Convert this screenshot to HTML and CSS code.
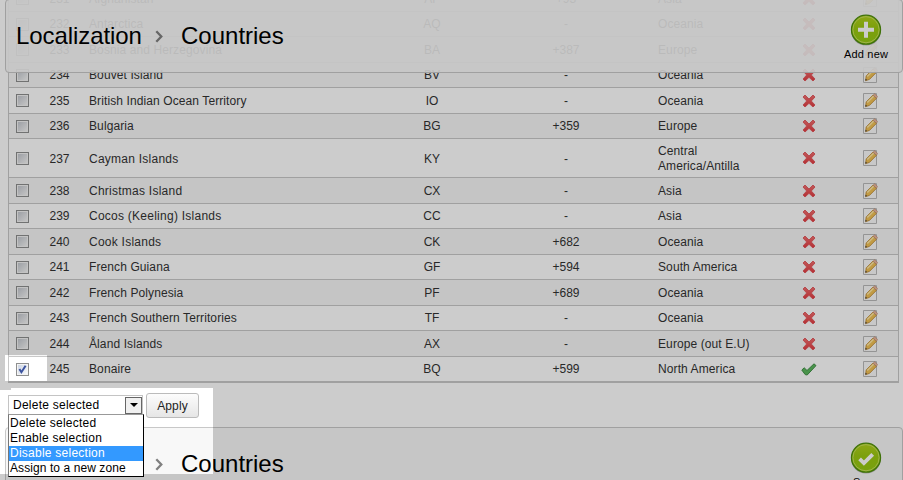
FILE: index.html
```html
<!DOCTYPE html>
<html lang="en">
<head>
<meta charset="utf-8">
<title>Localization - Countries</title>
<link rel="stylesheet" href="styles.css">
</head>
<body>
<svg class="defs" aria-hidden="true">
  <defs>
    <linearGradient id="red" x1="0" y1="0" x2="0" y2="1"><stop offset="0" stop-color="#f27070"/><stop offset="1" stop-color="#e23c42"/></linearGradient>
    <linearGradient id="green" x1="0" y1="0" x2="0" y2="1"><stop offset="0" stop-color="#b3d21c"/><stop offset=".45" stop-color="#9bc811"/><stop offset="1" stop-color="#96cb14"/></linearGradient>
  </defs>
  <symbol id="cross" viewBox="0 0 14 14"><path d="M3 1 7 5 11 1 13 3 9.3 7 13 11 11 13 7 9.3 3 13 1 11 4.7 7 1 3z" fill="url(#red)" stroke="#e2555a" stroke-width=".9"/></symbol>
  <symbol id="tick" viewBox="0 0 16 13"><path d="M.8 7 3.2 4.8 6 7.5 13 .8 15 2.6 6.2 12 4.2 11.6z" fill="#5cb85e" stroke="#3f8f45" stroke-width="1"/></symbol>
  <symbol id="edit" viewBox="0 0 16 16"><path d="M1.5.5h13v15h-13z" fill="#fafafa" stroke="#bababa"/><path d="M4.2 8.9 11 2.1l3.4 3.3-6.8 6.9-4 1.4z" fill="#f2c256" stroke="#b98430" stroke-width=".8"/><path d="m5.3 9.5 6.5-6.5" stroke="#ffeaa8" stroke-width="1.3"/><path d="m11 2.2 1.7-1.6 3 3-1.4 1.7z" fill="#eab59c" stroke="#b18468" stroke-width=".5"/><path d="m3.2 13.6.5-1.9 1.4 1.4z" fill="#444"/></symbol>
</svg>
<div class="page">
  <div class="countries">
    <div class="row r26 alt"><i class="check"></i><span>231</span><b>Afghanistan</b><span>AF</span><span>+93</span><b class="zone">Asia</b><svg class="x"><use href="#cross"/></svg><svg class="e"><use href="#edit"/></svg></div>
    <div class="row r25"><i class="check"></i><span>232</span><b>Antarctica</b><span>AQ</span><span>-</span><b class="zone">Oceania</b><svg class="x"><use href="#cross"/></svg><svg class="e"><use href="#edit"/></svg></div>
    <div class="row r26"><i class="check"></i><span>233</span><b>Bosnia and Herzegovina</b><span>BA</span><span>+387</span><b class="zone">Europe</b><svg class="x"><use href="#cross"/></svg><svg class="e"><use href="#edit"/></svg></div>
    <div class="row r25 alt"><i class="check"></i><span>234</span><b>Bouvet Island</b><span>BV</span><span>-</span><b class="zone">Oceania</b><svg class="x"><use href="#cross"/></svg><svg class="e"><use href="#edit"/></svg></div>
    <div class="row r26"><i class="check"></i><span>235</span><b>British Indian Ocean Territory</b><span>IO</span><span>-</span><b class="zone">Oceania</b><svg class="x"><use href="#cross"/></svg><svg class="e"><use href="#edit"/></svg></div>
    <div class="row r25 alt"><i class="check"></i><span>236</span><b>Bulgaria</b><span>BG</span><span>+359</span><b class="zone">Europe</b><svg class="x"><use href="#cross"/></svg><svg class="e"><use href="#edit"/></svg></div>
    <div class="row r39"><i class="check"></i><span>237</span><b class="loose">Cayman Islands</b><span>KY</span><span>-</span><b class="zone">Central<br>America/Antilla</b><svg class="x"><use href="#cross"/></svg><svg class="e"><use href="#edit"/></svg></div>
    <div class="row r26 alt"><i class="check"></i><span>238</span><b class="loose">Christmas Island</b><span>CX</span><span>-</span><b class="zone">Asia</b><svg class="x"><use href="#cross"/></svg><svg class="e"><use href="#edit"/></svg></div>
    <div class="row r25"><i class="check"></i><span>239</span><b class="loose">Cocos (Keeling) Islands</b><span>CC</span><span>-</span><b class="zone">Asia</b><svg class="x"><use href="#cross"/></svg><svg class="e"><use href="#edit"/></svg></div>
    <div class="row r26 alt"><i class="check"></i><span>240</span><b class="loose">Cook Islands</b><span>CK</span><span>+682</span><b class="zone">Oceania</b><svg class="x"><use href="#cross"/></svg><svg class="e"><use href="#edit"/></svg></div>
    <div class="row r25"><i class="check"></i><span>241</span><b>French Guiana</b><span>GF</span><span>+594</span><b class="zone">South America</b><svg class="x"><use href="#cross"/></svg><svg class="e"><use href="#edit"/></svg></div>
    <div class="row r26 alt"><i class="check"></i><span>242</span><b>French Polynesia</b><span>PF</span><span>+689</span><b class="zone">Oceania</b><svg class="x"><use href="#cross"/></svg><svg class="e"><use href="#edit"/></svg></div>
    <div class="row r25"><i class="check"></i><span>243</span><b>French Southern Territories</b><span>TF</span><span>-</span><b class="zone">Oceania</b><svg class="x"><use href="#cross"/></svg><svg class="e"><use href="#edit"/></svg></div>
    <div class="row r26 alt"><i class="check"></i><span>244</span><b>Åland Islands</b><span>AX</span><span>-</span><b class="zone">Europe (out E.U)</b><svg class="x"><use href="#cross"/></svg><svg class="e"><use href="#edit"/></svg></div>
    <div class="row last"><i class="check"><svg viewBox="0 0 13 13"><path d="M3.4 6 5.4 9.2 9.6 2.8" fill="none" stroke="#3b539f" stroke-width="2"/></svg></i><span>245</span><b>Bonaire</b><span>BQ</span><span>+599</span><b class="zone">North America</b><svg class="t"><use href="#tick"/></svg><svg class="e"><use href="#edit"/></svg></div>
  </div>

  <div class="bulk">
    <div class="select">
      <span class="value">Delete selected</span><span class="arrow"></span>
      <div class="menu">
        <div>Delete selected</div>
        <div>Enable selection</div>
        <div class="active">Disable selection</div>
        <div class="tight">Assign to a new zone</div>
      </div>
    </div>
    <button class="apply">Apply</button>
  </div>

  <div class="panel">
    <div class="crumbs"><span class="root"></span><svg class="chev" viewBox="0 0 8 13"><path d="M1.3 1.3 6.3 6.5 1.3 11.7" fill="none" stroke="#808080" stroke-width="2.3"/></svg><span>Countries</span></div>
    <div class="action"><svg viewBox="0 0 32 32"><circle cx="16" cy="16.6" r="15" fill="#000" opacity=".25"/><circle cx="16" cy="15.7" r="14.5" fill="url(#green)" stroke="#4f8f0c" stroke-width="1.3"/><circle cx="16" cy="15.7" r="13.1" fill="none" stroke="#c6e05c" stroke-width="1"/><path d="m9.6 16.8 4.3 4.3 8.8-8.8" fill="none" stroke="#fff" stroke-width="3.8"/></svg><span>Save</span></div>
  </div>

  <div class="panel sticky">
    <div class="crumbs"><span class="root">Localization</span><svg class="chev" viewBox="0 0 8 13"><path d="M1.3 1.3 6.3 6.5 1.3 11.7" fill="none" stroke="#808080" stroke-width="2.3"/></svg><span>Countries</span></div>
    <div class="action"><svg viewBox="0 0 32 32"><circle cx="16" cy="16.6" r="15" fill="#000" opacity=".25"/><circle cx="16" cy="15.7" r="14.5" fill="url(#green)" stroke="#4f8f0c" stroke-width="1.3"/><circle cx="16" cy="15.7" r="13.1" fill="none" stroke="#c6e05c" stroke-width="1"/><path d="M16 7.7v16M8 15.7h16" stroke="#fff" stroke-width="4"/></svg><span>Add new</span></div>
  </div>
  <div class="shade"></div>
</div>
</body>
</html>
```
FILE: styles.css
```css
* { box-sizing: border-box; }
body { margin: 0; background: #fff; font: 12px/15px "Liberation Sans", Arial, sans-serif; color: #333; }
.defs { position: absolute; width: 0; height: 0; }
.page { position: relative; width: 903px; height: 480px; overflow: hidden; }

.countries { width: 891px; margin: -14px 0 0 8px; border: 1px solid #c8c8c8; border-top: 0; border-bottom: 2px solid #c8c8c8; }
.row { display: grid; grid-template-columns: 27px 47px 306px 86px 182px 103px 98px 24px; align-items: center; justify-items: center; border-bottom: 1px solid #c8c8c8; }
.r25 { height: 25px; }
.r26 { height: 26px; }
.r39 { height: 39px; }
.r26 span, .r26 b, .r39 span, .r39 b { padding-top: 2px; }
.last { height: 24px; border-bottom: 0; }
.alt { background: #f7f7f7; }
.row b { font-weight: normal; justify-self: start; padding-left: 6px; white-space: nowrap; letter-spacing: .1px; }
.row .loose { letter-spacing: .25px; }
.row .zone { padding-left: 1px; }
.row .x { width: 14px; height: 14px; }
.row .t { width: 16px; height: 13px; }
.row .e { width: 16px; height: 16px; }
.check { width: 13px; height: 13px; border: 1px solid #8e8f8f; padding: 1px; background: linear-gradient(135deg, #c4c8cf, #f5f5f5) content-box, #f4f4f4; }
.check svg { display: block; width: 13px; height: 13px; margin: -2px; }
.last .check { background: linear-gradient(135deg, #cdd5e3, #f8f9fb) content-box, #f4f4f4; }

.bulk { display: flex; padding: 10px 0 0 8px; height: 44px; }
.select { position: relative; display: flex; justify-content: space-between; width: 135px; height: 20px; margin-top: 2px; border: 1px solid #c4c4c4; background: #fff; color: #000; padding-left: 4px; }
.value { line-height: 19px; letter-spacing: .25px; }
.arrow { width: 17px; height: 17px; margin-top: .5px; border: 1px solid #666; background: #f0f0f0; display: grid; place-items: center; }
.arrow::before { content: ""; border: 4px solid transparent; border-top-color: #000; border-bottom: 0; }
.menu { position: absolute; z-index: 1; left: -1px; top: 18px; width: 136px; height: 63px; padding-top: 1px; border: 1px solid #000; border-top-color: #999; border-left-color: #777; background: #fff; letter-spacing: .25px; white-space: nowrap; }
.menu div { height: 15px; padding-left: 1px; line-height: 15px; }
.menu .tight { letter-spacing: .08px; }
.menu .active { background: #39f; color: #fff; }
.apply { width: 53px; height: 25px; margin-left: 3px; padding: 0; border: 1px solid #bbb; border-radius: 3px; background: linear-gradient(#fcfcfc, #e6e6e6); font: 12px "Liberation Sans", Arial, sans-serif; letter-spacing: .1px; color: #222; }

.panel { display: flex; justify-content: space-between; width: 898px; height: 74px; margin-left: 5px; border: 1px solid #c8c8c8; border-radius: 4px; background: #f8f8f8; color: #000; }
.sticky { position: absolute; left: 0; top: -1px; background: rgba(248, 248, 248, .92); }
.crumbs { display: flex; align-items: center; height: 72px; padding-left: 10px; font-size: 24px; line-height: 28px; }
.root { width: 126px; margin-right: 13px; letter-spacing: -.08px; }
.chev { width: 8px; height: 13px; margin-right: 18px; }
.action { width: 60px; margin-right: 6px; padding-top: 14px; display: flex; flex-direction: column; align-items: center; font-size: 11px; line-height: 16px; letter-spacing: .2px; }
.action svg { width: 32px; height: 32px; }

/* Dims everything except the ticked row's checkbox and the bulk action area. */
.shade { position: absolute; inset: 0; background: rgba(0, 0, 0, .2); pointer-events: none; clip-path: path(evenodd, "M0 0H903V480H0Z M5 355H47V381H5Z M0 390H11V388H213V474H0Z"); }
```
